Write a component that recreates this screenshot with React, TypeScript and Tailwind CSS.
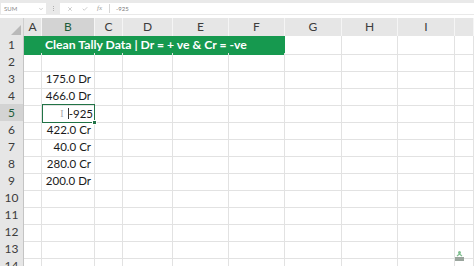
import { Check, X, ChevronDown } from "lucide-react";

const cols = ["A", "B", "C", "D", "E", "F", "G", "H", "I", ""];
const grid =
  "grid grid-cols-[24px_18px_53px_28px_50px_56px_56px_57px_56px_57px_19px]";

const values: Record<number, string> = {
  3: "175.0 Dr",
  4: "466.0 Dr",
  6: "422.0 Cr",
  7: "40.0 Cr",
  8: "280.0 Cr",
  9: "200.0 Dr",
};

function FormulaBar() {
  return (
    <div className="flex h-[18px] flex-col bg-white">
      <div className="flex h-[15px] items-center gap-[4px] bg-[#e9e9e9] pl-[1px] pt-[2px]">
        <div className="flex h-[11px] w-[45px] items-center justify-between bg-white pl-[3px] pr-[2px] text-[6px] text-[#8a8a8a]">
          <span>SUM</span>
          <ChevronDown size={6} strokeWidth={2} className="text-[#9a9a9a]" />
        </div>
        <div className="flex w-[6px] flex-col items-center gap-[1px]">
          <span className="h-[1px] w-[1px] bg-[#b0b0b0]" />
          <span className="h-[1px] w-[1px] bg-[#b0b0b0]" />
          <span className="h-[1px] w-[1px] bg-[#b0b0b0]" />
        </div>
        <div className="flex h-[11px] flex-1 items-center bg-white">
          <div className="flex w-[49px] items-center gap-[9px] pl-[7px] text-[#9a9a9a]">
            <X size={6} strokeWidth={2} />
            <Check size={6} strokeWidth={2} />
            <span className="font-['Liberation_Serif',serif] text-[7px] italic">fx</span>
          </div>
          <div className="h-[9px] w-[1px] bg-[#d6d6d6]" />
          <span className="pl-[6px] text-[6px] text-[#7a7a7a]">-925</span>
        </div>
      </div>
    </div>
  );
}

function HeaderRow() {
  return (
    <div className={`${grid} h-[18px] bg-[#e6e6e6] text-[12px] text-[#3c3c3c]`}>
      <div className="relative border-r border-[#cfcfcf]">
        <div className="absolute bottom-[1px] right-[2px] h-0 w-0 border-b-[10px] border-l-[10px] border-b-[#b9b9b9] border-l-transparent" />
      </div>
      {cols.map((c, i) => (
        <div
          key={i}
          className={
            c === "B"
              ? "flex items-center justify-center border-r border-[#f5f5f5] bg-[#d3d3d3] text-[#1d5c3a]"
              : "flex items-center justify-center border-r border-[#f5f5f5]"
          }
        >
          {c}
        </div>
      ))}
    </div>
  );
}

function Row({ n }: { n: number }) {
  const sel = n === 5;
  return (
    <div className={`${grid} h-[17px] text-[11.5px] text-[#1a1a1a]`}>
      <div
        className={
          sel
            ? "flex items-center justify-center border-b border-r border-[#c4c4c4] border-b-[#f3f3f3] bg-[#d3d3d3] text-[12px] text-[#1d5c3a]"
            : "flex items-center justify-center border-b border-r border-[#c4c4c4] border-b-[#f3f3f3] bg-[#e6e6e6] text-[12px] text-[#3c3c3c]"
        }
      >
        {n}
      </div>
      {cols.map((c, i) => {
        if (sel && c === "B") {
          return (
            <div
              key={i}
              className="relative flex items-center justify-end border-[1.5px] border-[#217346] pr-[1px]"
            >
              <span className="mr-[4px] font-['Liberation_Serif',serif] text-[10px] text-[#a8a8a8]">I</span>
              <span className="border-l border-[#333] leading-[11px]">-925</span>
              <div className="absolute -bottom-[3px] -right-[3px] h-[5px] w-[5px] border border-white bg-[#217346]" />
            </div>
          );
        }
        return (
          <div
            key={i}
            className="flex items-center justify-end border-b border-r border-[#e2e2e2] pr-[3px]"
          >
            {c === "B" && values[n]}
          </div>
        );
      })}
    </div>
  );
}

function BannerRow() {
  return (
    <div className={`${grid} h-[17px]`}>
      <div className="flex items-center justify-center border-b border-r border-[#c4c4c4] border-b-[#f3f3f3] bg-[#e6e6e6] text-[12px] text-[#3c3c3c]">
        1
      </div>
      <div className="col-span-6 flex items-center bg-[#16994f] pl-[21px] text-[12.2px] font-bold text-white">
        Clean Tally Data | Dr = + ve &amp; Cr = -ve
      </div>
      <div className="border-b border-r border-[#e2e2e2]" />
      <div className="border-b border-r border-[#e2e2e2]" />
      <div className="border-b border-r border-[#e2e2e2]" />
      <div className="border-b border-r border-[#e2e2e2]" />
    </div>
  );
}

export default function App() {
  const rows = [2, 3, 4, 5, 6, 7, 8, 9, 10, 11, 12, 13, 14];
  return (
    <div className="relative h-[266px] w-[474px] overflow-hidden bg-white font-['Lato',sans-serif]">
      <FormulaBar />
      <HeaderRow />
      <BannerRow />
      {rows.map((n) => (
        <Row key={n} n={n} />
      ))}
      <svg
        className="absolute bottom-[4px] right-[9px]"
        width="11"
        height="12"
        viewBox="0 0 11 12"
      >
        <circle cx="5.5" cy="2.5" r="1.5" fill="#7fbf8f" />
        <path d="M3 6 L5.5 4 L8 6" stroke="#7fbf8f" strokeWidth="1.2" fill="none" />
        <rect x="1" y="7" width="9" height="4" fill="#9aa59d" />
      </svg>
    </div>
  );
}
